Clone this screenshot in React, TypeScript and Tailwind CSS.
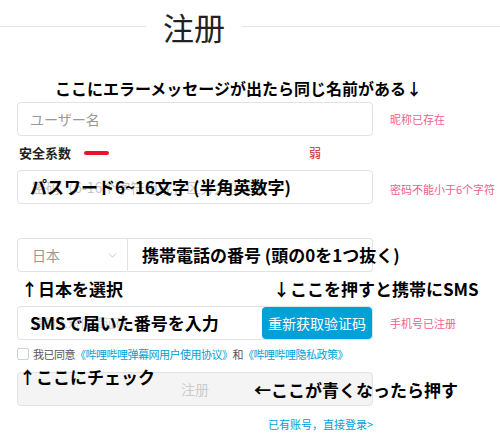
import { ChevronDown } from 'lucide-react';

const cjk = "font-['Noto_Sans_CJK_SC','Noto_Sans_CJK_JP',sans-serif]";
const note = "font-['Noto_Sans_CJK_JP','Noto_Sans_CJK_SC',sans-serif] font-bold text-black";

const Tip = ({ children }: { children: React.ReactNode }) => (
  <span className="ml-[17px] whitespace-nowrap text-[11px] text-[#f45d90]">{children}</span>
);

const App = () => {
  return (
    <div className={`relative h-[440px] w-[500px] overflow-hidden bg-white ${cjk}`}>
      {/* title */}
      <div className="flex h-[52px] items-center">
        <div className="h-px w-[146px] bg-[#e5e5e5]" />
        <h1 className="px-[17px] text-[31px] leading-none text-[#222]">注册</h1>
        <div className="h-px flex-1 bg-[#e5e5e5]" />
      </div>

      <div className="flex flex-col pl-[17px]">
        <div className={`h-[50px] pl-[38px] pt-[26px] text-[16px] leading-[20px] ${note}`}>
          ここにエラーメッセージが出たら同じ名前がある↓
        </div>

        <div className="flex items-center">
          <div className="flex h-[34px] w-[356px] shrink-0 items-center rounded-[4px] border border-[#e1e2e5] px-[12px] text-[14px] text-[#999]">
            ユーザー名
          </div>
          <Tip>昵称已存在</Tip>
        </div>

        <div className="flex h-[34px] items-center">
          <span className="ml-[2px] text-[13px] font-bold text-[#222]">安全系数</span>
          <span className="ml-[13px] h-[4px] w-[25px] rounded-full bg-[#e8162b]" />
          <span className="ml-[200px] text-[12px] text-[#c5261c]">弱</span>
        </div>

        <div className="flex items-center">
          <div className="relative flex h-[34px] w-[356px] shrink-0 items-center overflow-visible whitespace-nowrap rounded-[4px] border border-[#e1e2e5] px-[14px] text-[14px] text-[#c4c4c4]">
            密码（6-16个字符组成，区分大小写）
            <span className={`absolute left-[12px] top-[4px] text-[17px] leading-[24px] ${note}`}>
              パスワード6~16文字 (半角英数字)
            </span>
          </div>
          <span className="ml-[17px] mt-[4px] whitespace-nowrap text-[11px] text-[#f45d90]">密码不能小于6个字符</span>
        </div>

        <div className="h-[34px]" />

        <div className="flex w-[356px]">
          <div className="flex h-[34px] w-[111px] items-center justify-between rounded-l-[4px] border border-[#e1e2e5] pl-[14px] pr-[8px] text-[14px] text-[#999]">
            日本
            <ChevronDown size={13} strokeWidth={1.5} className="text-[#bbb]" />
          </div>
          <div className="relative h-[34px] flex-1 rounded-r-[4px] border border-l-0 border-[#e1e2e5]">
            <span className={`absolute left-[14px] top-[4px] whitespace-nowrap text-[17px] leading-[24px] ${note}`}>
              携帯電話の番号 (頭の0を1つ抜く)
            </span>
          </div>
        </div>

        <div className={`flex h-[34px] items-center text-[17px] ${note}`}>
          <span className="ml-[4px]">↑日本を選択</span>
          <span className="ml-[150px]">↓ここを押すと携帯にSMS</span>
        </div>

        <div className="flex items-center">
          <div className="relative flex h-[34px] w-[356px] shrink-0 items-center justify-between rounded-[4px] border border-[#e1e2e5] pl-[14px] text-[12px] text-[#ccc]">
            请输入短信验证码
            <span className={`absolute left-[12px] top-[4px] whitespace-nowrap text-[17px] leading-[24px] ${note}`}>
              SMSで届いた番号を入力
            </span>
            <button className="h-[32px] w-[110px] rounded-[4px] bg-[#00a1d6] text-[14px] text-white">
              重新获取验证码
            </button>
          </div>
          <Tip>手机号已注册</Tip>
        </div>

        <div className="flex h-[28px] items-center whitespace-nowrap text-[11px] tracking-[-0.5px]">
          <span className="h-[12px] w-[12px] rounded-[2px] border border-[#ccd0d7]" />
          <span className="ml-[4px] text-[#555]">我已同意</span>
          <span className="text-[#00a1d6]">《哔哩哔哩弹幕网用户使用协议》</span>
          <span className="text-[#555]">和</span>
          <span className="text-[#00a1d6]">《哔哩哔哩隐私政策》</span>
        </div>

        <div className="relative mt-[4px] w-[356px]">
          <div className="flex h-[34px] items-center justify-center rounded-[4px] border border-[#e1e2e5] bg-[#f4f4f4] text-[14px] text-[#ccc]">
            注册
          </div>
          <span className={`absolute -top-[7px] left-[2px] whitespace-nowrap text-[17px] leading-[24px] ${note}`}>
            ↑ここにチェック
          </span>
          <span className={`absolute left-[237px] top-[6px] whitespace-nowrap text-[17px] leading-[24px] ${note}`}>
            ←ここが青くなったら押す
          </span>
        </div>

        <div className="flex h-[36px] w-[356px] items-center justify-end text-[11px] text-[#00a1d6]">
          已有账号，直接登录&gt;
        </div>
      </div>
    </div>
  );
};

export default App;
